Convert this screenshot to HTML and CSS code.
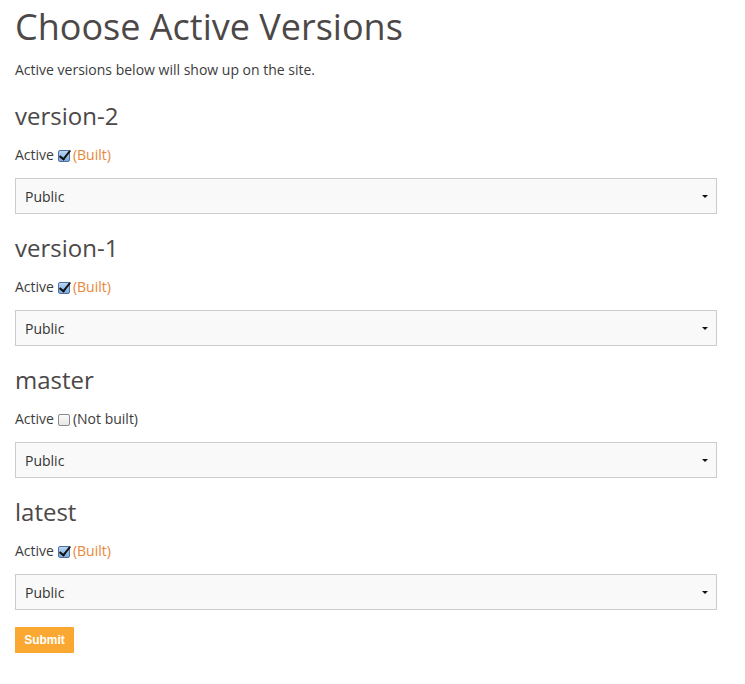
FILE: index.html
```html
<!DOCTYPE html>
<html>
<head>
<meta charset="utf-8">
<link rel="stylesheet" href="styles.css">
</head>
<body>
<div class="page">
  <h1 class="title">Choose Active Versions</h1>
  <p class="lead">Active versions below will show up on the site.</p>
  <form class="versions">
    <section class="version">
      <h2 class="vname">version-2</h2>
      <label class="active">Active <input type="checkbox" class="check" checked> <span class="built">(Built)</span></label>
      <div class="select"><span>Public</span><span class="caret"></span></div>
    </section>
    <section class="version">
      <h2 class="vname">version-1</h2>
      <label class="active">Active <input type="checkbox" class="check" checked> <span class="built">(Built)</span></label>
      <div class="select"><span>Public</span><span class="caret"></span></div>
    </section>
    <section class="version">
      <h2 class="vname">master</h2>
      <label class="active">Active <input type="checkbox" class="check"> <span class="notbuilt">(Not built)</span></label>
      <div class="select"><span>Public</span><span class="caret"></span></div>
    </section>
    <section class="version">
      <h2 class="vname">latest</h2>
      <label class="active">Active <input type="checkbox" class="check" checked> <span class="built">(Built)</span></label>
      <div class="select"><span>Public</span><span class="caret"></span></div>
    </section>
    <button type="button" class="submit">Submit</button>
  </form>
</div>
</body>
</html>
```
FILE: styles.css
```css
html, body {
  margin: 0;
  padding: 0;
  background: #fff;
}
body {
  font-family: "Open Sans", "Liberation Sans", sans-serif;
  color: #3c3c3c;
  font-size: 14px;
}
.page {
  padding: 0 28px 0 15px;
}
.title {
  margin: 0;
  padding-top: 3px;
  font-size: 36px;
  font-weight: 400;
  line-height: 48px;
  color: #4d4848;
}
.lead {
  margin: 9px 0 0;
  font-size: 14px;
  line-height: 20px;
}
.versions {
  margin-top: 20px;
}
.version {
  display: flex;
  flex-direction: column;
}
.vname {
  margin: 0;
  font-size: 24px;
  font-weight: 400;
  line-height: 32px;
  color: #4d4848;
}
.active {
  margin-top: 13px;
  display: flex;
  align-items: center;
  line-height: 20px;
  font-size: 14px;
}
.check {
  -webkit-appearance: none;
  appearance: none;
  width: 12px;
  height: 12px;
  margin: 1px 3px 0 4px;
  border: 1px solid #8a8a8a;
  border-radius: 2px;
  background: linear-gradient(#fcfcfc, #e6e6e6);
  position: relative;
}
.check:checked {
  border-color: #4f6f9a;
  background: linear-gradient(#b9d6f5, #7ba9de);
}
.check:checked::after {
  content: "";
  position: absolute;
  left: 3px;
  top: -3px;
  width: 4px;
  height: 10px;
  border: solid #111;
  border-width: 0 2px 2px 0;
  transform: rotate(38deg);
}
.built {
  color: #e8873a;
}
.notbuilt {
  color: #3c3c3c;
}
.select {
  margin-top: 13px;
  margin-bottom: 18px;
  height: 34px;
  border: 1px solid #cccccc;
  background: #f9f9f9;
  display: flex;
  align-items: center;
  justify-content: space-between;
  padding: 0 8px 0 9px;
  font-size: 14px;
  color: #333;
}
.caret {
  width: 0;
  height: 0;
  border-left: 3px solid transparent;
  border-right: 3px solid transparent;
  border-top: 3px solid #111;
  margin-top: 1px;
}
.submit {
  display: block;
  margin-top: -1px;
  width: 59px;
  height: 26px;
  border: none;
  background: #fba833;
  color: #fff;
  font-family: "Liberation Sans", Arial, sans-serif;
  font-weight: 700;
  font-size: 12px;
  padding: 0;
}
```
